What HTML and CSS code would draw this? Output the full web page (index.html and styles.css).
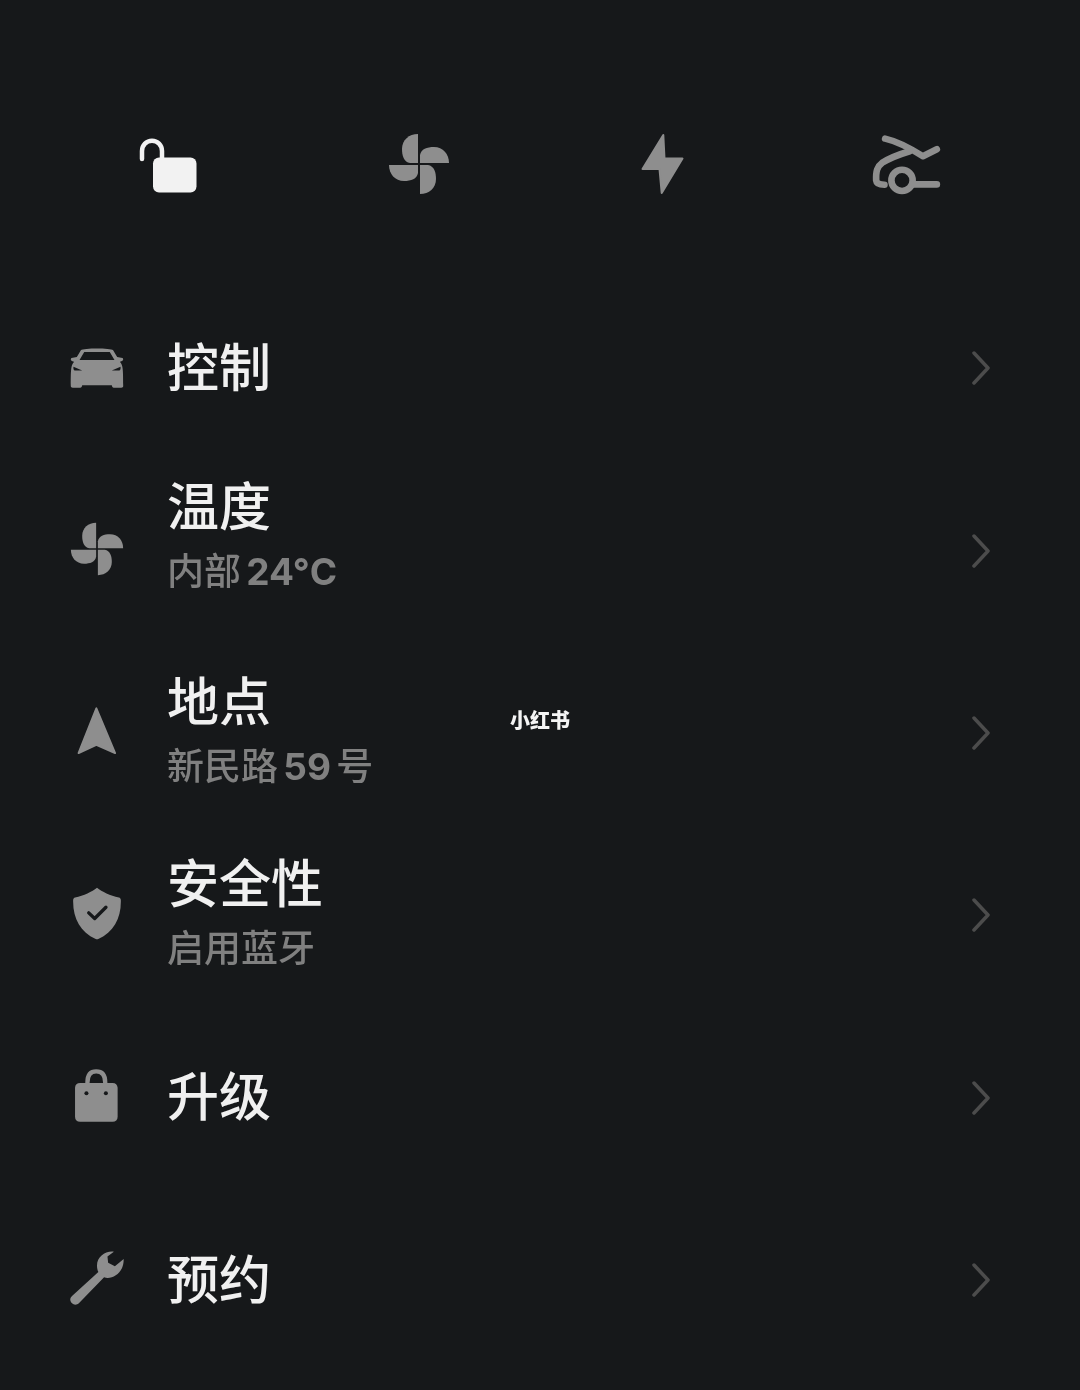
FILE: index.html
```html
<!DOCTYPE html>
<html lang="zh-CN">
<head>
<meta charset="utf-8">
<title>控制</title>
<link rel="stylesheet" href="styles.css">
</head>
<body>
<div class="app">
  <header class="quick">
    <svg class="qi qi-lock" viewBox="0 0 59 59"><path class="shackle" d="M4 24V16C4 10 8.500 5.700 14 5.700S24 10 24 16V24"/><rect class="lock-body" x="15" y="22.500" width="43.500" height="35" rx="6"/></svg>
    <svg class="qi qi-fan" viewBox="-31 -31 62 62"><g class="solid"><path d="M1-1H30C30-10 24-17 15-17 8-17 2-15 1-9Z"/><path d="M1-1H30C30-10 24-17 15-17 8-17 2-15 1-9Z" transform="rotate(90)"/><path d="M1-1H30C30-10 24-17 15-17 8-17 2-15 1-9Z" transform="rotate(180)"/><path d="M1-1H30C30-10 24-17 15-17 8-17 2-15 1-9Z" transform="rotate(270)"/></g></svg>
    <svg class="qi qi-bolt" viewBox="641 133 44 62"><path class="solid bolt" d="M663.300 135 642.500 169 659.500 169 661.700 193 682.500 158.500 664.500 158.500Z"/></svg>
    <svg class="qi qi-trunk" viewBox="755 35 210 190"><path class="line" d="M794 52C830 60 868 80 908 105L950 84"/><path class="line" d="M868 90C835 100 805 112 785 125 770 136 766 150 767 178 768 188 776 191 792 191"/><circle class="line" cx="845" cy="178" r="32"/><path class="line" d="M880 190H950"/></svg>
  </header>

  <ul class="menu">
    <li class="row">
      <span class="ico"><svg class="i-car" viewBox="30 52 160 122"><path class="solid" d="M62 62C70 55 150 55 158 62L170 82 186 85C190 88 188 95 178 96 187 106 188 115 188 168 188 172 186 173 182 173H160C156 173 155 171 154 166H66C65 171 64 173 60 173H38C34 173 32 172 32 168 32 115 33 106 42 96 32 95 30 88 34 85L50 82Z"/><path class="cut" d="M72 67H148L162 91H58ZM40 111 66 122H44C41 122 39 118 40 111ZM180 111 154 122H176C179 122 181 118 180 111Z"/></svg></span>
      <div class="txt one"><div class="ttl">控制</div></div>
      <svg class="chev" viewBox="0 0 18 34"><path d="M2 2 16 17 2 32"/></svg>
    </li>
    <li class="row">
      <span class="ico"><svg class="i-fan" viewBox="-31 -31 62 62"><g class="solid"><path d="M1-1H30C30-10 24-17 15-17 8-17 2-15 1-9Z"/><path d="M1-1H30C30-10 24-17 15-17 8-17 2-15 1-9Z" transform="rotate(90)"/><path d="M1-1H30C30-10 24-17 15-17 8-17 2-15 1-9Z" transform="rotate(180)"/><path d="M1-1H30C30-10 24-17 15-17 8-17 2-15 1-9Z" transform="rotate(270)"/></g></svg></span>
      <div class="txt raised"><div class="ttl">温度</div><div class="sub">内部 <b>24°C</b></div></div>
      <svg class="chev" viewBox="0 0 18 34"><path d="M2 2 16 17 2 32"/></svg>
    </li>
    <li class="row">
      <span class="ico"><svg class="i-nav" viewBox="50 110 120 146"><path class="solid nav" d="M108 114 54 250 108 225 165 250Z"/></svg></span>
      <div class="txt"><div class="ttl">地点</div><div class="sub">新民路 <b>59</b> 号</div></div>
      <svg class="chev" viewBox="0 0 18 34"><path d="M2 2 16 17 2 32"/></svg>
    </li>
    <li class="row">
      <span class="ico"><svg class="i-shield" viewBox="38 650 144 160"><path class="solid" d="M110 652C125 664 150 676 176 682 180 683 182 686 182 690 183 745 160 785 114 807 111 808 109 808 106 807 60 785 37 745 38 690 38 686 40 683 44 682 70 676 95 664 110 652Z"/><path class="tick" d="M85 728 103 745 137 711"/></svg></span>
      <div class="txt high"><div class="ttl">安全性</div><div class="sub">启用蓝牙</div></div>
      <svg class="chev" viewBox="0 0 18 34"><path d="M2 2 16 17 2 32"/></svg>
    </li>
    <li class="row">
      <span class="ico"><svg class="i-bag" viewBox="45 28 128 158"><path class="handle" d="M82 100V68C82 45 92 35 108 35S135 45 135 68V100"/><path class="solid" d="M60 70H157C166 70 171 75 172 84V170C172 180 166 185 157 185H60C51 185 45 180 45 170V84C45 75 51 70 60 70Z"/><circle class="cut" cx="79" cy="100" r="6"/><circle class="cut" cx="137" cy="100" r="6"/></svg></span>
      <div class="txt one"><div class="ttl">升级</div></div>
      <svg class="chev" viewBox="0 0 18 34"><path d="M2 2 16 17 2 32"/></svg>
    </li>
    <li class="row">
      <span class="ico"><svg class="i-wrench" viewBox="30 575 160 160"><path class="solid" d="M160 577C135 574 110 592 110 618 110 625 111 631 114 637L36 708C28 716 30 724 36 730 42 736 51 735 57 729L131 653C155 661 190 640 189 599L163 620 143 610 141 591Z"/></svg></span>
      <div class="txt one"><div class="ttl">预约</div></div>
      <svg class="chev" viewBox="0 0 18 34"><path d="M2 2 16 17 2 32"/></svg>
    </li>
  </ul>
  <div class="mark">小红书</div>
</div>
</body>
</html>
```
FILE: styles.css
```css
* { box-sizing: border-box; }
html, body { margin: 0; padding: 0; background: #16181a; }
.app {
  position: relative;
  width: 1080px;
  height: 1390px;
  overflow: hidden;
  padding-top: 133px;
  font-family: "Noto Sans CJK SC", "Noto Sans", sans-serif;
  filter: blur(0.6px);
}
.quick {
  display: flex;
  align-items: center;
  gap: 191px;
  height: 62px;
  margin-left: 138px;
  margin-bottom: 82px;
}
.qi { display: block; flex: none; }
.qi-lock { width: 59px; height: 59px; }
.qi-fan { width: 62px; height: 62px; margin-right: -1px; }
.qi-bolt { width: 44px; height: 62px; margin-left: 1px; margin-right: -1px; }
.qi-trunk { width: 70px; height: 63px; margin-left: -3px; }
.shackle { fill: none; stroke: #f2f2f2; stroke-width: 4.500; stroke-linecap: round; }
.lock-body { fill: #f2f2f2; }
.solid { fill: #8e8e8e; }
.bolt { stroke: #8e8e8e; stroke-width: 2; stroke-linejoin: round; }
.nav { stroke: #8e8e8e; stroke-width: 6; stroke-linejoin: round; }
.line { fill: none; stroke: #8e8e8e; stroke-width: 20; stroke-linecap: round; stroke-linejoin: round; }
.cut { fill: #16181a; }
.tick { fill: none; stroke: #16181a; stroke-width: 10; stroke-linecap: round; stroke-linejoin: round; }
.handle { fill: none; stroke: #8e8e8e; stroke-width: 13; }
.menu { list-style: none; margin: 0; padding: 0; }
.row {
  display: flex;
  align-items: center;
  height: 182.4px;
  padding: 0 90px 0 68px;
}
.ico { flex: none; width: 57px; margin: 0 42px 4px 0; display: flex; justify-content: center; align-items: center; }
.ico svg { display: block; }
.i-car { width: 54px; height: 41px; margin-top: 2px; }
.i-fan { width: 54px; height: 54px; }
.i-nav { width: 40px; height: 48px; }
.i-shield { width: 48px; height: 53px; }
.i-bag { width: 43px; height: 53px; }
.i-wrench { width: 54px; height: 54px; }
.txt { flex: 1; padding-top: 2px; }
.txt.one { padding-top: 0; padding-bottom: 7px; }
.txt.raised { padding-top: 0; padding-bottom: 25px; }
.txt.high { padding-top: 0; padding-bottom: 2px; }
.ttl { font-size: 52px; line-height: 64px; font-weight: 500; color: #f0f0f0; }
.sub { font-size: 37px; line-height: 66px; font-weight: 500; color: #808080; word-spacing: -3px; }
.sub b { font-family: Inter, "Liberation Sans", sans-serif; font-weight: 700; }
.chev { flex: none; width: 18px; height: 34px; }
.chev path { fill: none; stroke: #4c4c4c; stroke-width: 3.500; stroke-linecap: round; stroke-linejoin: round; }
.mark {
  position: absolute;
  left: 510px;
  top: 706px;
  width: 60px;
  font-size: 20px;
  line-height: 28px;
  font-weight: 900;
  color: #f4f4f4;
  text-align: center;
  white-space: nowrap;
}
```
